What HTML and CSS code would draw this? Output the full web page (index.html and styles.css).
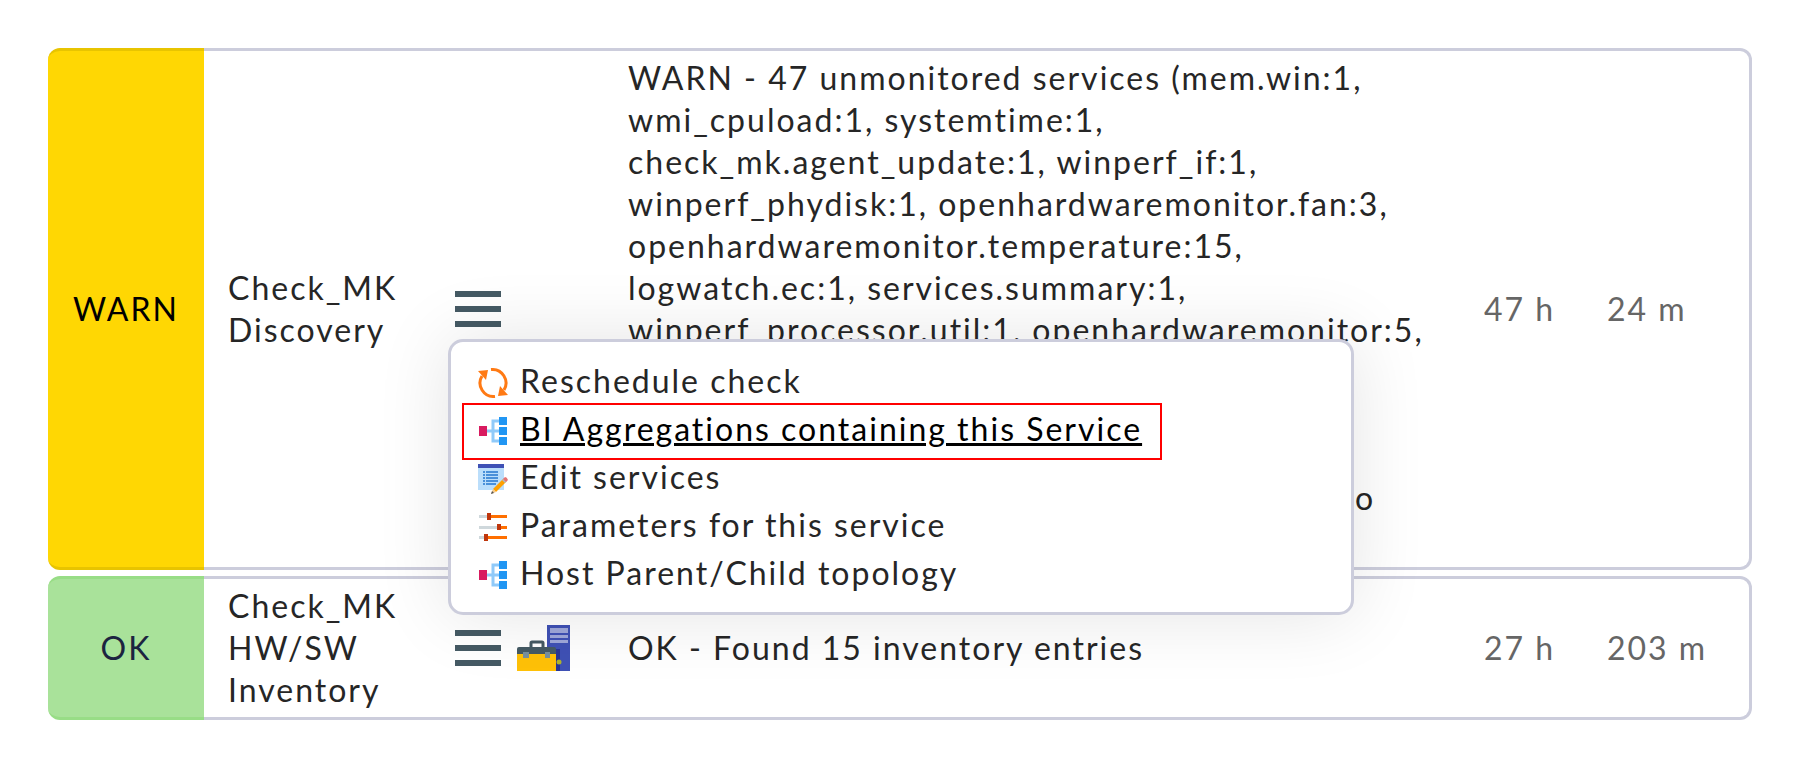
FILE: index.html
```html
<!DOCTYPE html>
<html lang="en">
<head>
<meta charset="utf-8">
<title>Services</title>
<link rel="stylesheet" href="styles.css">
</head>
<body>
<svg class="defs" aria-hidden="true">
  <symbol id="icon-menu" viewBox="0 0 60 60">
    <path fill="#455a64" d="M7 12h46v6H7zM7 27h46v6H7zM7 42h46v6H7z"/>
  </symbol>
  <symbol id="icon-tree" viewBox="0 0 30 30">
    <path d="M9 15h12M21 5h-6v20h6" fill="none" stroke="#90caf9" stroke-width="3"/>
    <path fill="#d81b60" d="M1 10h8v10H1z"/>
    <path fill="#2196f3" d="M21 1h8v8h-8zM21 11h8v8h-8zM21 21h8v8h-8z"/>
  </symbol>
</svg>
<main>
<table class="services">
  <colgroup>
    <col class="col-state"><col class="col-name"><col class="col-icons"><col><col class="col-age"><col class="col-checked">
  </colgroup>
  <tbody>
    <tr>
      <td class="state warn">WARN</td>
      <td>Check_MK Discovery</td>
      <td class="icons">
        <div class="icon-row">
          <div class="menu-anchor">
            <button class="icon-button" type="button" aria-label="Action menu" aria-expanded="true"><svg><use href="#icon-menu"/></svg></button>
            <nav class="popup" aria-label="Service actions">
              <a href="#reschedule">
                <svg viewBox="0 0 30 30"><g fill="none" stroke="#ff7a14" stroke-width="3"><path d="M13 1.6A13.5 13.5 0 0 1 26 22"/><path d="M17 28.400A13.500 13.500 0 0 1 4 8"/></g><path fill="#ff7a14" d="M0 3l10-1-2 10zM30 27l-10 1 2-10z"/></svg>
                <span>Reschedule check</span>
              </a>
              <a class="active" href="#bi">
                <svg><use href="#icon-tree"/></svg>
                <span>BI Aggregations containing this Service</span>
              </a>
              <a href="#edit">
                <svg viewBox="0 0 30 30"><path fill="#bbdefb" d="M0 4h26v22H0z"/><path fill="#3f51b5" d="M0 0h26v4H0z"/><path fill="#4a90d9" d="M5 7h2v2H5zM8 7h12v2H8zM5 10h2v2H5zM8 10h12v2H8zM5 13h2v2H5zM8 13h12v2H8zM5 16h2v2H5zM8 16h12v2H8zM5 19h2v2H5zM8 19h10v2H8z"/><path fill="#ffa000" d="M15 25L25 15l3 3-10 10z"/><path fill="#f3c98b" d="M15 25l3 3-5 2z"/><path fill="#555" d="M14 27l2 2-3 1z"/><path fill="#b0bec5" d="M24 16l2-2 3 3-2 2z"/><path fill="#e57373" d="M25 15l2-2q2 0 3 3l-2 2z"/></svg>
                <span>Edit services</span>
              </a>
              <a href="#parameters">
                <svg viewBox="0 0 30 30"><path fill="#cfd8dc" d="M1 3h11v3H1zM1 14h20v3H1zM1 24h7v3H1z"/><path fill="#ff6f00" d="M12 3h17v3H12zM22 14h7v3h-7zM9 24h20v3H9z"/><path fill="#bf360c" d="M9 1h4v7H9zM19 12h4v6h-4zM6 22h4v7H6z"/></svg>
                <span>Parameters for this service</span>
              </a>
              <a href="#topology">
                <svg><use href="#icon-tree"/></svg>
                <span>Host Parent/Child topology</span>
              </a>
            </nav>
          </div>
        </div>
      </td>
      <td>WARN - 47 unmonitored services (mem.win:1, wmi_cpuload:1, systemtime:1, check_mk.agent_update:1, winperf_if:1, winperf_phydisk:1, openhardwaremonitor.fan:3, openhardwaremonitor.temperature:15, logwatch.ec:1, services.summary:1, winperf_processor.util:1, openhardwaremonitor:5,<br>services:16, uptime:1),<br>no vanished services found,<br>no new host labels,<br>the next discovery for this host is scheduled to<br>run soon</td>
      <td class="age">47 h</td>
      <td class="age">24 m</td>
    </tr>
    <tr>
      <td class="state ok">OK</td>
      <td>Check_MK HW/SW Inventory</td>
      <td class="icons">
        <div class="icon-row">
          <button class="icon-button" type="button" aria-label="Action menu"><svg><use href="#icon-menu"/></svg></button>
          <button class="icon-button" type="button" aria-label="Hardware and software inventory"><svg viewBox="0 0 60 60"><path fill="#3f51b5" d="M33 7h23v46H33z"/><path fill="#9fa8da" d="M36 10h18v5H36zM36 17h18v3H36zM36 22h18v3H36z"/><path fill="#283593" d="M42 31h4v22h-4z"/><circle cx="45" cy="44" r="2.500" fill="#afb42b"/><path d="M17 29v-4q0-1 1-1h10q1 0 1 1v4" fill="none" stroke="#455a64" stroke-width="3"/><path fill="#ffc107" d="M3 35h39v18H3z"/><path fill="#455a64" d="M3 36v-5q0-2 2-2h35q2 0 2 2v5z"/><path fill="#78909c" d="M9 34h6v6H9zM31 34h5v6h-5z"/></svg></button>
        </div>
      </td>
      <td>OK - Found 15 inventory entries</td>
      <td class="age">27 h</td>
      <td class="age">203 m</td>
    </tr>
  </tbody>
</table>
</main>
</body>
</html>
```
FILE: styles.css
```css
body {
  margin: 42px 48px;
  background: #fff;
  color: #262626;
  font: 32px/42px Lato, sans-serif;
  letter-spacing: 2px;
}

.defs {
  position: absolute;
  width: 0;
  height: 0;
}

.services {
  width: 100%;
  table-layout: fixed;
  border-collapse: separate;
  border-spacing: 0 6px;
}

.col-state { width: 156px; }
.col-name { width: 220px; }
.col-icons { width: 180px; }
.col-age { width: 123px; }
.col-checked { width: 169px; }

.services td {
  padding: 6px 24px;
  border: solid #cccddc;
  border-width: 3px 0;
  vertical-align: middle;
}

.services td:last-child {
  border-right-width: 3px;
  border-radius: 0 12px 12px 0;
}

.services .state {
  padding: 6px 0;
  border-radius: 12px 0 0 12px;
  text-align: center;
}

.services .warn {
  background: #ffd703;
  border-color: #e8c400;
  color: #000;
}

.services .ok {
  background: #a9e29a;
  border-color: #98dd86;
  color: #1c2440;
}

.services .age {
  padding-right: 0;
  color: #666;
  white-space: nowrap;
}

.services .icons {
  padding-right: 0;
}

.icon-row {
  display: flex;
  gap: 6px;
}

.menu-anchor {
  position: relative;
}

.icon-button {
  display: block;
  width: 60px;
  height: 60px;
  padding: 0;
  border: 0;
  background: none;
}

.icon-button svg {
  display: block;
  width: 60px;
  height: 60px;
}

.popup {
  position: absolute;
  z-index: 1;
  top: 100%;
  left: 0;
  box-sizing: border-box;
  width: 906px;
  padding: 15px 27px;
  border: 3px solid #cccddc;
  border-radius: 15px;
  background: #fff;
  box-shadow: 0 0 75px rgba(0, 0, 0, 0.11);
}

.popup a {
  position: relative;
  display: flex;
  align-items: center;
  gap: 12px;
  width: fit-content;
  height: 48px;
  color: inherit;
  text-decoration: none;
  white-space: nowrap;
}

.popup svg {
  width: 30px;
  height: 30px;
  margin-top: 4px;
}

.popup .active {
  color: #000;
}

.popup .active span {
  text-decoration: underline;
  text-decoration-thickness: 3px;
}

/* Marker frame around the highlighted entry */
.popup .active::after {
  content: "";
  position: absolute;
  inset: -2px -20px -7px -16px;
  border: 2px solid #f00;
}
```
